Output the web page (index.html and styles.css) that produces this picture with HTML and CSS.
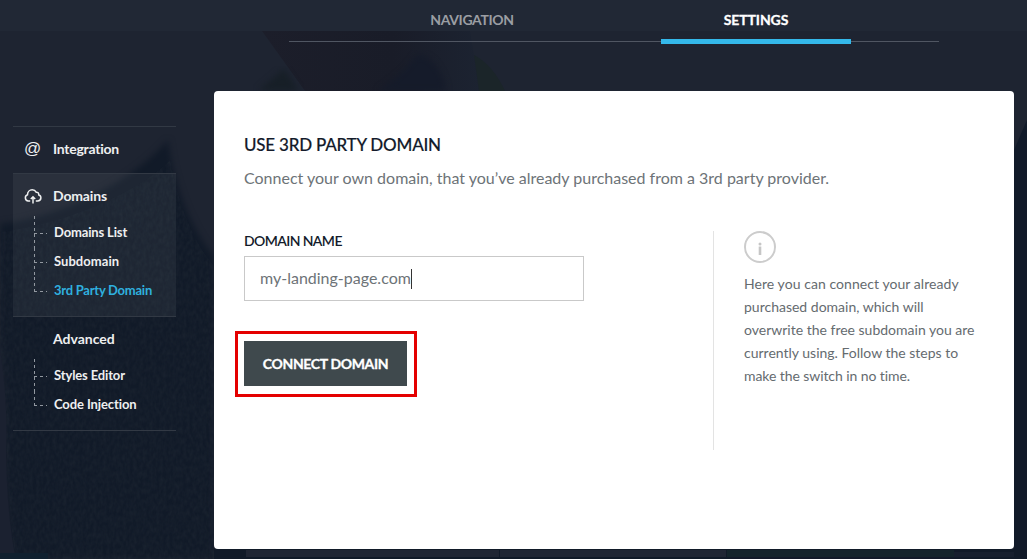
FILE: index.html
```html
<!DOCTYPE html>
<html lang="en">
<head>
<meta charset="utf-8">
<title>Domain Settings</title>
<link rel="stylesheet" href="styles.css">
</head>
<body>
<svg class="backdrop" viewBox="0 0 1027 559" aria-hidden="true">
  <defs>
    <filter id="soft" x="-10%" y="-10%" width="120%" height="120%" color-interpolation-filters="sRGB"><feGaussianBlur stdDeviation="3"/></filter>
    <linearGradient id="fold"><stop offset="0" stop-color="#1c1e2a"/><stop offset=".6" stop-color="#191c28"/><stop offset="1" stop-color="#1c2331"/></linearGradient>
    <filter id="cloth" x="0" y="0" width="100%" height="100%" color-interpolation-filters="sRGB">
      <feTurbulence type="fractalNoise" baseFrequency="0.3 0.18" numOctaves="2" seed="4"/>
      <feColorMatrix values="0 0 0 0 .17  0 0 0 0 .2  0 0 0 0 .24  .5 0 0 0 -.14"/>
      <feComposite in2="SourceGraphic" operator="in"/>
    </filter>
  </defs>
  <rect width="1027" height="559" fill="#1e2431"/>
  <path d="M262 31H470L480 91H305Z" fill="url(#fold)"/>
  <path d="M378 91Q402 76 418 54Q440 60 446 91Z" fill="#151b2a" filter="url(#soft)"/>
  <path d="M258 91L284 69L299 91Z" fill="#171f27" filter="url(#soft)"/>
  <path d="M474 55Q493 65 505 91H479Z" fill="#1b2529"/>
  <path d="M0 224C70 216 135 178 168 140C174 190 195 235 214 256V559H14C2 490 8 390 0 340Z" fill="#111a28" filter="url(#soft)"/>
  <path d="M0 232C70 224 145 188 170 160C178 205 195 245 214 266V559H16C4 490 8 390 0 350Z" fill="#111a29" filter="url(#cloth)"/>
  <path d="M1014 150L1027 120V559H1014Z" fill="#111a29"/>
  <rect x="214" y="549" width="813" height="10" fill="#111a28"/>
  <path d="M0 350Q8 400 6 450Q7 520 16 559H0Z" fill="#1b2130"/>
  <rect y="553" width="48" height="6" fill="#10202f"/>
  <path d="M246 550H499V557H246ZM500 550H726V557H500Z" fill="#202634"/>
  <rect x="727" y="550" width="227" height="7" fill="#14242b"/>
  <rect x="954" y="552" width="60" height="5" fill="#171f2e"/>
</svg>
<div class="page">
  <header class="header">
    <nav class="tabs">
      <a class="tab tab-navigation">NAVIGATION</a>
      <a class="tab tab-settings active">SETTINGS</a>
    </nav>
  </header>
  <div class="content">
    <aside class="sidebar">
      <section class="group single">
        <h2 class="group-title"><span class="icon at">@</span><span class="t-integration">Integration</span></h2>
      </section>
      <section class="group open">
        <h2 class="group-title"><span class="icon"><svg width="18" height="16" viewBox="0 0 18 16"><path d="M6.2 13H4.2A3.2 3.2 0 0 1 3.5 6.8C3.5 3.8 5.6 1.8 8.2 1.8Q10.9 1.8 12.2 4.2Q14.8 4 14.8 7Q17 7.7 16.9 9.9Q16.7 13 13.5 13H11.8" fill="none" stroke="currentColor" stroke-width="1.5"/><path d="M9 15.5V9.6M6.8 11L9 8.8L11.2 11" fill="none" stroke="currentColor" stroke-width="1.5"/></svg></span><span class="t-domains">Domains</span></h2>
        <ul class="tree">
          <li><span class="t-list">Domains List</span></li>
          <li><span class="t-sub">Subdomain</span></li>
          <li class="current"><span class="t-third">3rd Party Domain</span></li>
        </ul>
      </section>
      <section class="group">
        <h2 class="group-title"><span class="icon"></span><span class="t-advanced">Advanced</span></h2>
        <ul class="tree">
          <li><span class="t-styles">Styles Editor</span></li>
          <li><span class="t-code">Code Injection</span></li>
        </ul>
      </section>
    </aside>
    <main class="card">
      <h1 class="title">USE 3RD PARTY DOMAIN</h1>
      <p class="lead">Connect your own domain, that you’ve already purchased from a 3rd party provider.</p>
      <div class="columns">
        <form class="form">
          <label class="label">DOMAIN NAME</label>
          <div class="field"><span class="value">my-landing-page.com</span><i class="caret"></i></div>
          <div class="highlight"><button class="button" type="button">CONNECT DOMAIN</button></div>
        </form>
        <aside class="info">
          <svg class="info-icon" width="32" height="32" viewBox="0 0 32 32"><circle cx="16" cy="16" r="15" fill="none" stroke="#ccc" stroke-width="2"/><path d="M16 15.5V24" stroke="#c6c6c6" stroke-width="2.6"/><circle cx="16" cy="13" r="1.5" fill="#c6c6c6"/></svg>
          <p class="help"><span class="l1">Here you can connect your already</span><br>purchased domain, which will<br>overwrite the free subdomain you are<br>currently using. Follow the steps to<br><span class="l5">make the switch in no time.</span></p>
        </aside>
      </div>
    </main>
  </div>
</div>
</body>
</html>
```
FILE: styles.css
```css
* { box-sizing: border-box; }
body { margin: 0; background: #1e2431; font-family: Lato, "Liberation Sans", sans-serif; overflow: hidden; }
h1, h2, p, ul { margin: 0; padding: 0; }
.backdrop { position: absolute; inset: 0; width: 1027px; height: 559px; }
.page { position: relative; height: 559px; }
.header { height: 91px; background: linear-gradient(#212835 31px, transparent 31px); padding-left: 289px; }
.tabs { display: flex; gap: 94px; width: 650px; height: 44px; padding-left: 88px; background: linear-gradient(#505662, #505662) 0 41px / 100% 1px no-repeat; }
.tab { width: 190px; height: 44px; text-align: center; font-size: 14px; font-weight: 700; line-height: 40px; color: #9b9ea3; }
.tab-navigation { letter-spacing: -.35px; }
.tab-settings { letter-spacing: -.1px; }
.tab.active { color: #fff; border-bottom: 5px solid #34b8ea; -webkit-text-stroke: .3px; }
.content { display: flex; gap: 38px; padding-left: 13px; align-items: flex-start; }
.sidebar { width: 163px; margin-top: 35px; color: #eeeff0; border-bottom: 1px solid #323944; }
.group { border-top: 1px solid #323944; }
.single { height: 47px; }
.group.open { background: rgba(255, 255, 255, .055); }
.group-title { display: flex; align-items: center; height: 42px; padding-top: 2px; font-size: 14px; line-height: 20px; font-weight: 700; }
.t-integration { letter-spacing: -.25px; }
.t-domains { letter-spacing: -.15px; }
.t-advanced { letter-spacing: 0; }
.icon { width: 29px; height: 20px; margin-left: 11px; display: flex; align-items: center; }
.at { font-family: "Liberation Sans", sans-serif; font-size: 17px; font-weight: 400; }
.tree { list-style: none; padding: 0 0 10px 21px; }
.tree li { display: flex; height: 29px; font-size: 13px; font-weight: 700; line-height: 18px; background:
  repeating-linear-gradient(90deg, #9298a0 0 3px, transparent 3px 6px) 0 14px / 13px 1px no-repeat,
  repeating-linear-gradient(#9298a0 0 3px, transparent 3px 6px) 0 0 / 1px 29px no-repeat; padding: 4px 0 0 20px; }
.tree li:first-child { height: 32px; padding-top: 7px; background-position: 0 17px, 0 0; background-size: 13px 1px, 1px 32px; }
.tree li:last-child { background-size: 13px 1px, 1px 14px; }
.tree .current { color: #2fb0df; }
.t-list { letter-spacing: -.15px; }
.t-sub { letter-spacing: .05px; }
.t-third { letter-spacing: -.25px; }
.t-styles { letter-spacing: -.13px; }
.t-code { letter-spacing: -.1px; }
.card { width: 800px; height: 458px; background: #fff; border-radius: 4px; padding: 42px 30px 0; }
.title { height: 24px; font-size: 17px; line-height: 24px; font-weight: 500; letter-spacing: -.22px; color: #131b2b; -webkit-text-stroke: .15px; }
.lead { margin-top: 9px; height: 24px; font-size: 16px; line-height: 24px; color: #6d7377; white-space: nowrap; }
.columns { display: flex; margin-top: 41px; }
.form { width: 469px; }
.label { display: block; height: 25px; font-size: 14px; line-height: 20px; font-weight: 600; letter-spacing: -.6px; color: #131b2b; }
.field { display: flex; align-items: center; width: 340px; height: 45px; border: 1px solid #c9c9c9; padding-left: 15px; font-size: 16px; color: #6d7377; }
.value { padding-bottom: 2px; }
.caret { width: 1px; height: 20px; background: #333; }
.highlight { width: 182px; height: 66px; margin: 30px 0 0 -9px; border: 3px solid #e40000; padding: 7px 0 0 6px; }
.button { display: block; width: 163px; height: 45px; border: 0; padding: 0; background: #3f494d; color: #fff; font: 700 14px/20px Lato, sans-serif; letter-spacing: -.35px; -webkit-text-stroke: .3px; }
.info { width: 270px; height: 219px; border-left: 1px solid #e3e3e3; padding-left: 30px; }
.info-icon { display: block; }
.help { margin-top: 9px; font-size: 14px; line-height: 23px; color: #656b6f; white-space: nowrap; }
.l1 { letter-spacing: .06px; }
.l5 { letter-spacing: -.08px; }
```
